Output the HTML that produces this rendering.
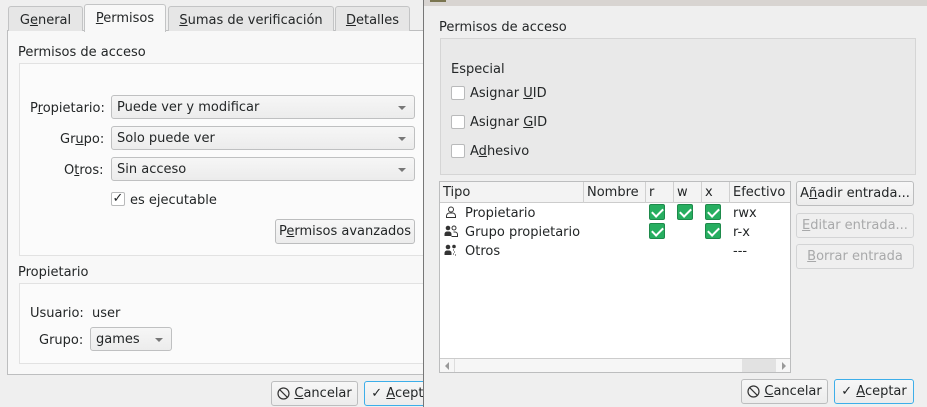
<!DOCTYPE html>
<html><head><meta charset="utf-8"><style>
*{box-sizing:border-box;margin:0;padding:0}
body{width:927px;height:407px;overflow:hidden;background:#efefef;font-family:"DejaVu Sans","Liberation Sans",sans-serif;font-size:13px;color:#232627;position:relative;line-height:19px}
.a{position:absolute}
.u{text-decoration:underline}
.tab{position:absolute;top:6px;height:25px;border:1px solid #c3c4c5;border-bottom:none;background:#e6e6e6;border-radius:3px 3px 0 0;text-align:center;line-height:27px}
.combo{position:absolute;height:24px;border:1px solid #bfc0c1;border-radius:3px;background:linear-gradient(#f6f6f6,#ececec);padding-left:5px;line-height:24px}
.combo:after{content:"";position:absolute;right:8px;top:10px;border-left:4px solid transparent;border-right:4px solid transparent;border-top:4px solid #777}
.btn{position:absolute;height:25px;border:1px solid #bcbdbe;border-radius:3px;background:linear-gradient(#f7f7f7,#ececec);text-align:center;line-height:24px}
.dis{color:#a8a9aa;border-color:#d3d4d5;background:#efefef}
.cb{position:absolute;width:14px;height:14px;border:1px solid #b9babb;background:#fff;border-radius:2px}
.g{position:absolute;width:16px;height:16px;background:#27ae60;border:1px solid #1e8a4b;border-radius:2px}
.g:after{content:"";position:absolute;left:4px;top:1px;width:5px;height:9px;border:solid #fff;border-width:0 2px 2px 0;transform:rotate(45deg)}
.th{position:absolute;top:0;height:21px;line-height:22px;padding-left:3px;border-right:1px solid #d0d0d0}
svg{vertical-align:middle}
</style></head><body>
<!-- left window -->
<div class="a" style="left:7px;top:30px;width:420px;height:345px;background:#f8f8f8;border:1px solid #bdbebf"></div>
<div class="tab" style="left:8px;width:75px">G<span class="u">e</span>neral</div>
<div class="tab" style="left:84px;width:82px;top:4px;height:28px;background:#f8f8f8;line-height:28px"><span class="u">P</span>ermisos</div>
<div class="tab" style="left:168px;width:166px"><span class="u">S</span>umas de verificación</div>
<div class="tab" style="left:335px;width:75px"><span class="u">D</span>etalles</div>
<div class="a" style="left:18px;top:43px">Permisos de acceso</div>
<div class="a" style="left:19px;top:63px;width:410px;height:193px;border:1px solid #e2e2e2;background:#fbfbfb"></div>
<div class="a" style="left:30px;top:99px">P<span class="u">r</span>opietario:</div>
<div class="a" style="left:60px;top:130px">Gr<span class="u">u</span>po:</div>
<div class="a" style="left:64px;top:161px">O<span class="u">t</span>ros:</div>
<div class="combo" style="left:111px;top:95px;width:304px">Puede ver y modificar</div>
<div class="combo" style="left:111px;top:126px;width:304px">Solo puede ver</div>
<div class="combo" style="left:111px;top:157px;width:304px">Sin acceso</div>
<div class="cb" style="left:111px;top:192px;font-size:13px;line-height:12px;text-align:center;font-weight:bold">✓</div>
<div class="a" style="left:130px;top:191px">es e<span class="u">j</span>ecutable</div>
<div class="btn" style="left:275px;top:219px;width:140px">P<span class="u">e</span>rmisos avanzados</div>
<div class="a" style="left:18px;top:263px">Propietario</div>
<div class="a" style="left:19px;top:283px;width:410px;height:81px;border:1px solid #e2e2e2;background:#fbfbfb"></div>
<div class="a" style="left:30px;top:304px">Usuario:&nbsp; user</div>
<div class="a" style="left:39px;top:331px">Grupo:</div>
<div class="combo" style="left:90px;top:327px;width:82px">games</div>
<div class="btn" style="left:271px;top:381px;width:87px"><svg width="13" height="13" viewBox="0 0 13 13"><circle cx="6.5" cy="6.5" r="5.5" fill="none" stroke="#333" stroke-width="1.2"/><path d="M2.7 2.7L10.3 10.3" stroke="#333" stroke-width="1.2"/></svg> <span class="u">C</span>ancelar</div>
<div class="btn" style="left:364px;top:381px;width:80px;border-color:#3daee9">✓ <span class="u">A</span>ceptar</div>
<!-- right window -->
<div class="a" style="left:423px;top:0;width:504px;height:407px;background:#efefef;border-left:1px solid #777"></div>
<div class="a" style="left:424px;top:0;width:503px;height:6px;background:#d8d4d1"></div>
<div class="a" style="left:430px;top:0;width:16px;height:2px;background:#7a7550"></div>
<div class="a" style="left:439px;top:18px">Permisos de acceso</div>
<div class="a" style="left:440px;top:38px;width:476px;height:137px;border:1px solid #d5d5d5;background:#e9e9e9"></div>
<div class="a" style="left:451px;top:60px">Especial</div>
<div class="cb" style="left:451px;top:86px"></div><div class="a" style="left:470px;top:84px">Asignar <span class="u">U</span>ID</div>
<div class="cb" style="left:451px;top:115px"></div><div class="a" style="left:470px;top:113px">Asignar <span class="u">G</span>ID</div>
<div class="cb" style="left:451px;top:144px"></div><div class="a" style="left:470px;top:142px">A<span class="u">d</span>hesivo</div>
<div class="a" style="left:439px;top:181px;width:352px;height:192px;border:1px solid #bcbdbe;background:#fff;overflow:hidden">
 <div class="a" style="left:0;top:0;width:352px;height:21px;background:#f3f3f3;border-bottom:1px solid #ccc"></div>
 <div class="th" style="left:0;width:144px">Tipo</div>
 <div class="th" style="left:144px;width:62px">Nombre</div>
 <div class="th" style="left:206px;width:28px">r</div>
 <div class="th" style="left:234px;width:28px">w</div>
 <div class="th" style="left:262px;width:28px">x</div>
 <div class="th" style="left:290px;width:62px;border:none">Efectivo</div>
 <svg class="a" style="left:5px;top:24px" width="12" height="12" viewBox="0 0 12 12"><circle cx="6" cy="3.5" r="2.5" fill="none" stroke="#333"/><path d="M1.5 11.5V10a3 3 0 0 1 3-3h3a3 3 0 0 1 3 3v1.5z" fill="none" stroke="#333"/></svg>
 <div class="a" style="left:25px;top:22px">Propietario</div>
 <svg class="a" style="left:4px;top:43px" width="14" height="12" viewBox="0 0 14 12"><circle cx="4" cy="3" r="2.3" fill="#333"/><path d="M0.5 11V9a2.5 2.5 0 0 1 2.5-2.5h2A2.5 2.5 0 0 1 7.5 9v2z" fill="#333"/><circle cx="10" cy="3" r="2" fill="none" stroke="#333"/><path d="M7.5 11.5h6V9.5a2.5 2.5 0 0 0-2.5-2.5H9.5" fill="none" stroke="#333"/></svg>
 <div class="a" style="left:25px;top:41px">Grupo propietario</div>
 <svg class="a" style="left:4px;top:62px" width="14" height="12" viewBox="0 0 14 12"><circle cx="4" cy="3" r="2.3" fill="#333"/><path d="M0.5 11V9a2.5 2.5 0 0 1 2.5-2.5h2A2.5 2.5 0 0 1 7.5 9v2z" fill="#333"/><circle cx="10" cy="2.5" r="1.8" fill="#333"/><path d="M9 6h1M10 8h1M9 10h1M11 11h1" stroke="#333"/></svg>
 <div class="a" style="left:25px;top:60px">Otros</div>
 <div class="g" style="left:209px;top:22px"></div><div class="g" style="left:237px;top:22px"></div><div class="g" style="left:265px;top:22px"></div>
 <div class="g" style="left:209px;top:41px"></div><div class="g" style="left:265px;top:41px"></div>
 <div class="a" style="left:293px;top:22px">rwx</div>
 <div class="a" style="left:293px;top:41px">r-x</div>
 <div class="a" style="left:293px;top:60px">---</div>
 <div class="a" style="left:0;top:176px;width:352px;height:16px;border-top:1px solid #ccc;background:#f6f6f6"></div>
 <div class="a" style="left:14px;top:177px;width:1px;height:14px;background:#ddd"></div>
 <div class="a" style="left:302px;top:177px;width:34px;height:14px;background:#e2e2e2"></div>
 <div class="a" style="left:5px;top:180px;border-right:4px solid #999;border-top:4px solid transparent;border-bottom:4px solid transparent"></div>
 <div class="a" style="left:342px;top:180px;border-left:4px solid #999;border-top:4px solid transparent;border-bottom:4px solid transparent"></div>
</div>
<div class="btn" style="left:796px;top:181px;width:118px">A<span class="u">ñ</span>adir entrada...</div>
<div class="btn dis" style="left:796px;top:213px;width:118px"><span class="u">E</span>ditar entrada...</div>
<div class="btn dis" style="left:796px;top:244px;width:118px"><span class="u">B</span>orrar entrada</div>
<div class="btn" style="left:741px;top:379px;width:87px"><svg width="13" height="13" viewBox="0 0 13 13"><circle cx="6.5" cy="6.5" r="5.5" fill="none" stroke="#333" stroke-width="1.2"/><path d="M2.7 2.7L10.3 10.3" stroke="#333" stroke-width="1.2"/></svg> <span class="u">C</span>ancelar</div>
<div class="btn" style="left:834px;top:379px;width:80px;border-color:#3daee9">✓ <span class="u">A</span>ceptar</div>
</body></html>
